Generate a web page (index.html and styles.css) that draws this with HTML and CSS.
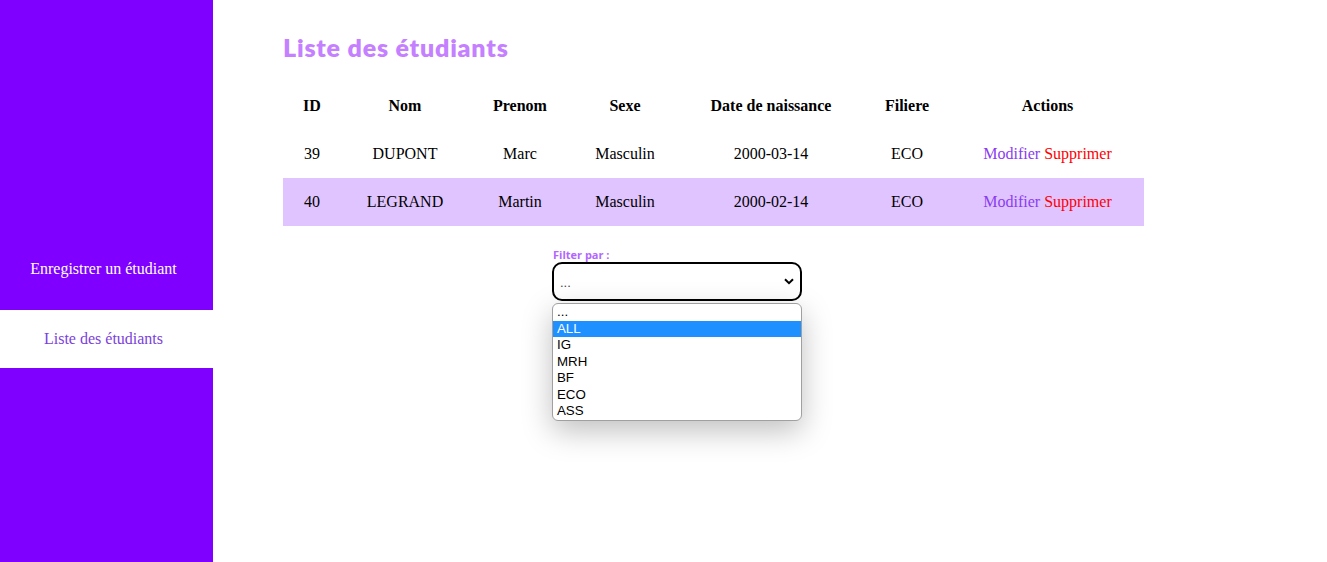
FILE: index.html
```html
<!DOCTYPE html>
<html lang="fr">
<head>
<meta charset="utf-8">
<title>Liste des étudiants</title>
<link rel="stylesheet" href="styles.css">
</head>
<body>
<div class="layout">
  <aside class="sidebar">
    <a class="nav-item">Enregistrer un étudiant</a>
    <a class="nav-item active">Liste des étudiants</a>
  </aside>
  <main class="main">
    <h1 class="title">Liste des étudiants</h1>
    <table class="students">
      <thead>
        <tr><th>ID</th><th>Nom</th><th>Prenom</th><th>Sexe</th><th>Date de naissance</th><th>Filiere</th><th>Actions</th></tr>
      </thead>
      <tbody>
        <tr><td>39</td><td>DUPONT</td><td>Marc</td><td>Masculin</td><td>2000-03-14</td><td>ECO</td><td><a class="edit">Modifier</a> <a class="del">Supprimer</a></td></tr>
        <tr class="alt"><td>40</td><td>LEGRAND</td><td>Martin</td><td>Masculin</td><td>2000-02-14</td><td>ECO</td><td><a class="edit">Modifier</a> <a class="del">Supprimer</a></td></tr>
      </tbody>
    </table>
    <div class="filter">
      <label class="filter-label">Filter par :</label>
      <div class="select">
        <span class="select-value">...</span>
        <svg class="chevron" width="10" height="7" viewBox="0 0 10 7"><path d="M1 1.2 L5 5.2 L9 1.2" fill="none" stroke="#000" stroke-width="2"/></svg>
        <ul class="options">
          <li>...</li>
          <li class="selected">ALL</li>
          <li>IG</li>
          <li>MRH</li>
          <li>BF</li>
          <li>ECO</li>
          <li>ASS</li>
        </ul>
      </div>
    </div>
  </main>
</div>
</body>
</html>
```
FILE: styles.css
```css
* { box-sizing: border-box; }
html, body { margin: 0; padding: 0; height: 100%; }
body {
  font-family: "Liberation Serif", "Times New Roman", serif;
  font-size: 16px;
  color: #000;
  background: #fff;
}
.layout { display: flex; min-height: 562px; height: 100%; }
.sidebar {
  width: 213px;
  flex: 0 0 213px;
  background: #8000ff;
  display: flex;
  flex-direction: column;
  padding-top: 240px;
  gap: 12px;
}
.nav-item {
  height: 58px;
  display: flex;
  align-items: center;
  justify-content: center;
  padding-right: 6px;
  color: #fff;
  font-size: 16px;
  cursor: pointer;
}
.nav-item.active {
  background: #fff;
  color: #7b3fdc;
}
.main {
  flex: 1;
  padding: 30px 0 0 70px;
}
.title {
  margin: 0 0 18px;
  font-family: Lato, "Open Sans", sans-serif;
  font-weight: 800;
  font-size: 25px;
  letter-spacing: 0.8px;
  line-height: 34px;
  color: #c580ff;
}
.students {
  border-collapse: collapse;
  width: 861px;
  table-layout: fixed;
}
.students th, .students td {
  height: 48px;
  padding: 0;
  text-align: center;
  vertical-align: middle;
  font-size: 16px;
}
.students th { font-weight: bold; }
.students th:nth-child(1) { width: 58px; }
.students th:nth-child(2) { width: 128px; }
.students th:nth-child(3) { width: 102px; }
.students th:nth-child(4) { width: 108px; }
.students th:nth-child(5) { width: 184px; }
.students th:nth-child(6) { width: 88px; }
.students th:nth-child(7) { width: 193px; }
.students tr.alt { background: #e0c4ff; }
.edit { color: #8a3cf0; cursor: pointer; }
.del { color: #ff0000; cursor: pointer; }
.filter {
  margin: 22px 0 0 269px;
  width: 250px;
  display: flex;
  flex-direction: column;
}
.filter-label {
  font-family: "Open Sans", "Noto Sans", sans-serif;
  font-weight: bold;
  font-size: 11px;
  line-height: 14px;
  color: #b266ff;
  padding-left: 1px;
}
.select {
  position: relative;
  height: 39px;
  border: 2px solid #000;
  border-radius: 10px;
  display: flex;
  align-items: center;
  justify-content: space-between;
  padding: 0 6px 0 6px;
  font-family: "Liberation Sans", Arial, sans-serif;
  font-size: 13px;
}
.select-value { color: #444; padding-top: 2px; }
.chevron { margin-right: 0; }
.options {
  position: absolute;
  left: -2px;
  right: -2px;
  top: 39px;
  margin: 0;
  padding: 0;
  list-style: none;
  background: #fff;
  border: 1px solid #a0a0a0;
  border-radius: 6px;
  overflow: hidden;
  box-shadow: 0 10px 30px rgba(0,0,0,0.25);
  font-family: "Liberation Sans", Arial, sans-serif;
  font-size: 13.3px;
}
.options li {
  height: 16.5px;
  line-height: 16.5px;
  padding-left: 4px;
  color: #000;
}
.options li.selected { background: #1e90ff; color: #fff; }
```
